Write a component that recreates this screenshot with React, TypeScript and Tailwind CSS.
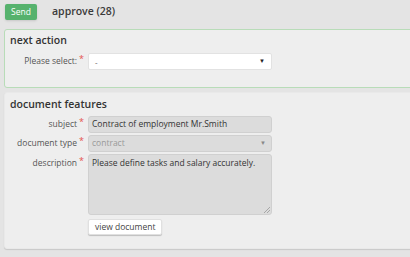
function Req() {
  return <span className="text-[#e5534b] ml-[2px] text-[9px] leading-none relative -top-[2px]">*</span>;
}

function Row({ label, children, top = false }: { label: string; children: React.ReactNode; top?: boolean }) {
  return (
    <div className={`flex ${top ? 'items-start' : 'items-center'}`}>
      <div className={`w-[78px] shrink-0 text-right pr-[4px] text-[8.5px] text-[#555] ${top ? 'pt-[3px]' : ''}`}>
        {label}
        <Req />
      </div>
      {children}
    </div>
  );
}

function App() {
  return (
    <div className="w-[410px] h-[257px] overflow-hidden bg-[#e4e4e4] font-['Open_Sans',sans-serif] text-[#333]">
      {/* Toolbar */}
      <div className="flex items-center h-[29px] pl-[5px] pb-[8px] pt-[3px] box-border">
        <button className="w-[32px] h-[16px] rounded-[2px] bg-[#56b26d] text-white text-[8.5px] leading-none shadow-sm">
          Send
        </button>
        <div className="ml-[15px] text-[10.5px] font-semibold text-[#3a3a3a]">approve (28)</div>
      </div>

      {/* Next action */}
      <div className="ml-[4px] -mr-[4px] h-[59px] rounded-[3px] border border-[#b8dcb8] bg-[#eeeeee] px-[5px] pt-[2px]">
        <div className="text-[10.5px] font-semibold text-[#333] leading-[16px]">next action</div>
        <div className="mt-[5px]">
          <Row label="Please select:">
            <div className="w-[184px] h-[17px] bg-white rounded-[2px] border border-[#e2e2e2] flex items-center justify-between px-[6px] text-[8px] text-[#555]">
              <span>-</span>
              <span className="text-[6px] text-[#222]">▼</span>
            </div>
          </Row>
        </div>
      </div>

      {/* Document features */}
      <div className="mt-[4px] ml-[4px] -mr-[4px] h-[157px] rounded-[3px] border border-[#e9e9e9] bg-[#eeeeee] shadow-[0_1px_1px_rgba(0,0,0,0.12)] px-[5px] pt-[3px]">
        <div className="text-[10.5px] font-semibold text-[#333] leading-[16px]">document features</div>
        <div className="mt-[4px] flex flex-col gap-[2px]">
          <Row label="subject">
            <div className="w-[184px] h-[17px] bg-[#dcdcdc] rounded-[3px] border border-[#d0d0d0] flex items-center px-[3px] text-[8.5px] text-[#333]">
              Contract of employment Mr.Smith
            </div>
          </Row>
          <Row label="document type">
            <div className="w-[184px] h-[17px] bg-[#dcdcdc] rounded-[3px] border border-[#d0d0d0] flex items-center justify-between px-[3px] text-[8.5px] text-[#999]">
              <span>contract</span>
              <span className="text-[6px] text-[#888] pr-[2px]">▼</span>
            </div>
          </Row>
          <Row label="description" top>
            <div className="relative w-[184px] h-[61px] bg-[#dcdcdc] rounded-[3px] border border-[#d0d0d0] px-[3px] pt-[2px] text-[8.5px] text-[#333]">
              Please define tasks and salary accurately.
              <svg className="absolute right-[1px] bottom-[1px]" width="6" height="6" viewBox="0 0 6 6">
                <path d="M6 0 L0 6 M6 3 L3 6" stroke="#999" strokeWidth="0.8" />
              </svg>
            </div>
          </Row>
          <div className="flex pl-[78px] mt-[2px]">
            <button className="h-[16px] px-[6px] bg-white rounded-[2px] border border-[#e0e0e0] shadow-[0_1px_1px_rgba(0,0,0,0.2)] text-[8.5px] text-[#444] leading-none">
              view document
            </button>
          </div>
        </div>
      </div>
    </div>
  );
}

export default App;
